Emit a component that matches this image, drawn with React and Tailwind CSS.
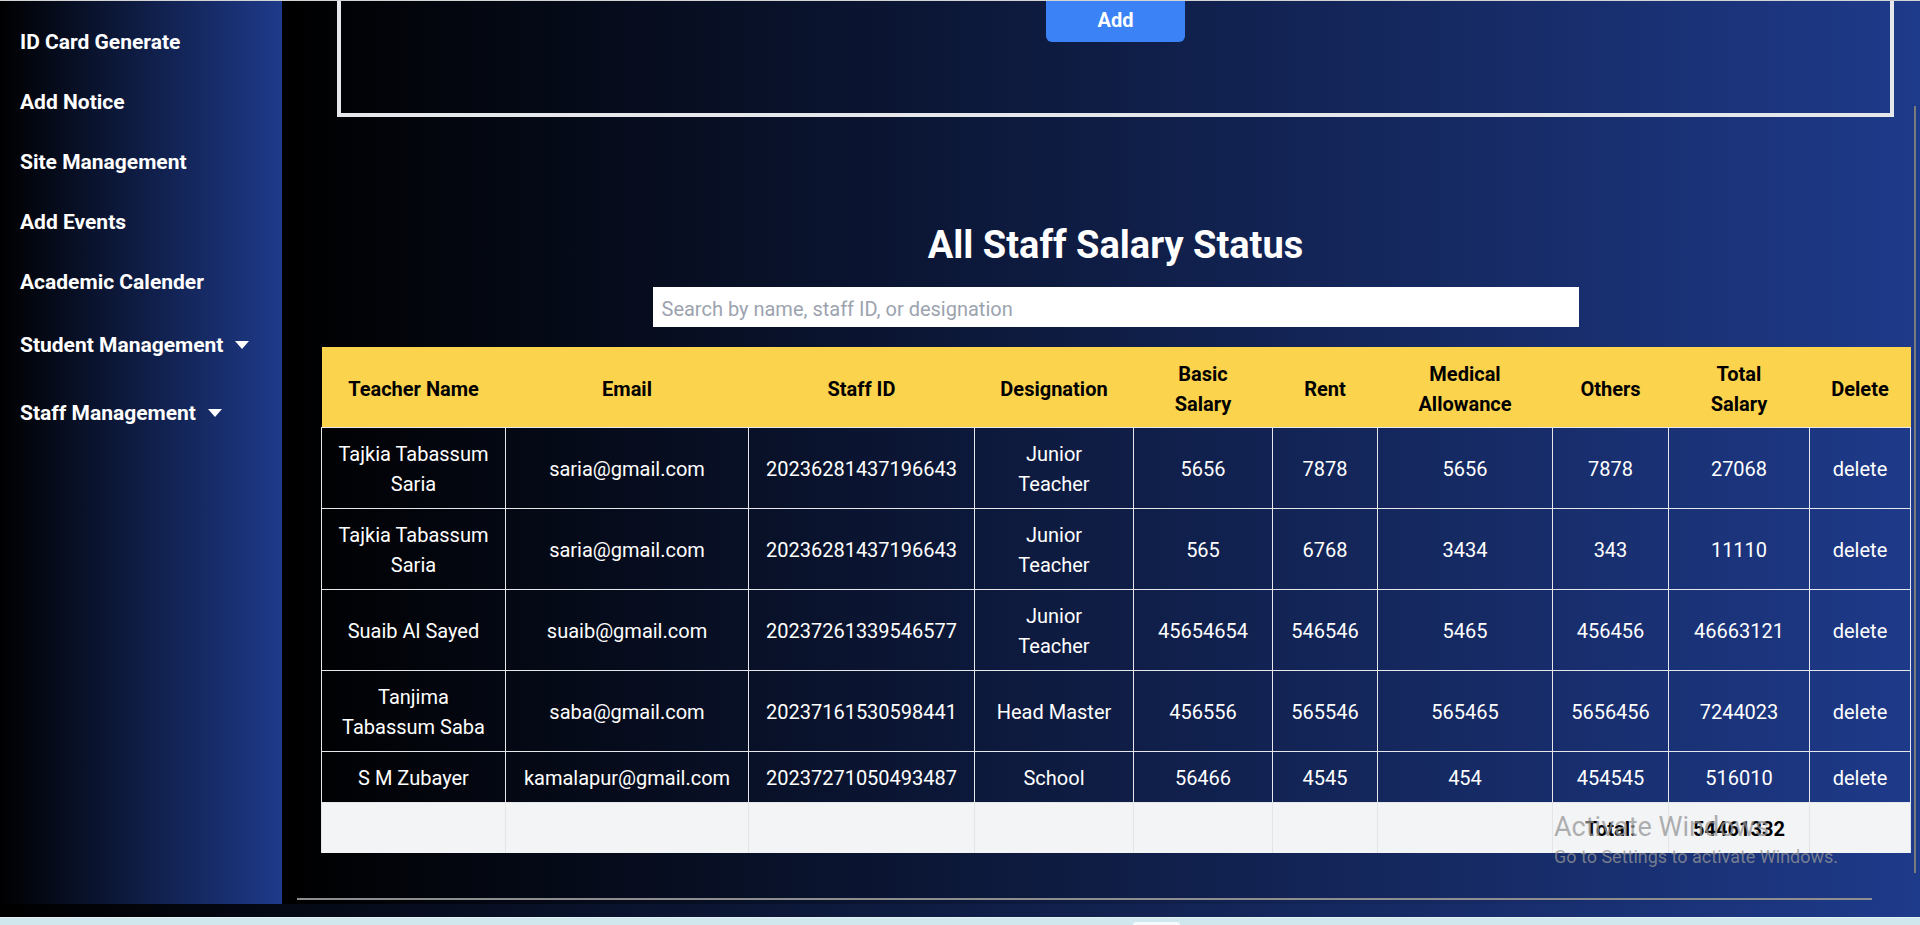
import React from "react";

const rows = [
  { name: ["Tajkia Tabassum", "Saria"], email: "saria@gmail.com", id: "20236281437196643", des: ["Junior", "Teacher"], basic: "5656", rent: "7878", med: "5656", others: "7878", total: "27068" },
  { name: ["Tajkia Tabassum", "Saria"], email: "saria@gmail.com", id: "20236281437196643", des: ["Junior", "Teacher"], basic: "565", rent: "6768", med: "3434", others: "343", total: "11110" },
  { name: ["Suaib Al Sayed"], email: "suaib@gmail.com", id: "20237261339546577", des: ["Junior", "Teacher"], basic: "45654654", rent: "546546", med: "5465", others: "456456", total: "46663121" },
  { name: ["Tanjima", "Tabassum Saba"], email: "saba@gmail.com", id: "20237161530598441", des: ["Head Master"], basic: "456556", rent: "565546", med: "565465", others: "5656456", total: "7244023" },
  { name: ["S M Zubayer"], email: "kamalapur@gmail.com", id: "20237271050493487", des: ["School"], basic: "56466", rent: "4545", med: "454", others: "454545", total: "516010" },
];

const headers = [["Teacher Name"], ["Email"], ["Staff ID"], ["Designation"], ["Basic", "Salary"], ["Rent"], ["Medical", "Allowance"], ["Others"], ["Total", "Salary"], ["Delete"]];

function Lines({ lines }) {
  return lines.map((l, i) => (
    <span key={i} className="block">
      {l}
    </span>
  ));
}

function Caret() {
  return (
    <svg width="14" height="8" viewBox="0 0 14 8" className="ml-3 inline-block">
      <path d="M0 0H14L7 8Z" fill="white" />
    </svg>
  );
}

export default function App() {
  const td = "border border-[#e5e7eb] px-2 pt-[11px] pb-[9px] text-center whitespace-nowrap";
  const ftd = "border-x border-[#e2e4e8] bg-[#f3f4f6] px-2 pt-[11px] pb-[9px] text-center whitespace-nowrap";
  return (
    <div className="relative flex h-[925px] w-full flex-col overflow-hidden bg-linear-to-r/srgb from-black to-[#1e3a8a] font-['Roboto',sans-serif] text-[20px] leading-[30px]">
      <div className="h-px w-full bg-[#d4d4d4]" />
      <div className="flex h-[903px]">
        <aside className="w-[282px] shrink-0 bg-linear-to-r/srgb from-black to-[#1e3a8a] pl-5 pt-[11px] text-[21px] font-bold text-white">
          <div className="py-[15px]">ID Card Generate</div>
          <div className="py-[15px]">Add Notice</div>
          <div className="py-[15px]">Site Management</div>
          <div className="py-[15px]">Add Events</div>
          <div className="py-[15px]">Academic Calender</div>
          <div className="flex items-center py-[18px]">
            Student Management
            <Caret />
          </div>
          <div className="flex items-center pt-[20px]">
            Staff Management
            <Caret />
          </div>
        </aside>
        <main className="flex flex-1 flex-col bg-linear-to-r/srgb from-black to-[#1e3a8a]">
          <div className="ml-[39px] w-[1589px]">
            <div className="mx-4 h-[116px] border-x-4 border-b-4 border-[#e5e7eb]">
              <button className="mx-auto flex h-[41px] w-[139px] items-center justify-center rounded-b-md bg-[#3b82f6] pb-1 font-bold text-white">
                Add
              </button>
            </div>
            <h1 className="mt-[106px] pt-[2px] h-[40px] text-center text-[38px] font-bold leading-[40px] text-white">All Staff Salary Status</h1>
            <input
              type="text"
              placeholder="Search by name, staff ID, or designation"
              className="mx-auto mt-6 block h-[40px] w-[926px] bg-white pl-[9px] pt-[3px] text-[20px] text-black outline-none placeholder:text-[#9ca3af]"
            />
            <table className="mt-5 w-[1589px] table-fixed border-collapse text-white">
              <colgroup>
                <col className="w-[184px]" />
                <col className="w-[243px]" />
                <col className="w-[226px]" />
                <col className="w-[159px]" />
                <col className="w-[139px]" />
                <col className="w-[105px]" />
                <col className="w-[175px]" />
                <col className="w-[116px]" />
                <col className="w-[141px]" />
                <col className="w-[101px]" />
              </colgroup>
              <thead>
                <tr className="h-[80px] bg-[#fcd34d] text-black">
                  {headers.map((h, i) => (
                    <th key={i} className="px-1 pt-[12px] pb-[8px] text-center font-bold whitespace-nowrap">
                      <Lines lines={h} />
                    </th>
                  ))}
                </tr>
              </thead>
              <tbody>
                {rows.map((r, i) => (
                  <tr key={i}>
                    <td className={td}><Lines lines={r.name} /></td>
                    <td className={td}>{r.email}</td>
                    <td className={td}>{r.id}</td>
                    <td className={td}><Lines lines={r.des} /></td>
                    <td className={td}>{r.basic}</td>
                    <td className={td}>{r.rent}</td>
                    <td className={td}>{r.med}</td>
                    <td className={td}>{r.others}</td>
                    <td className={td}>{r.total}</td>
                    <td className={td}>delete</td>
                  </tr>
                ))}
                <tr className="text-black">
                  <td className={ftd}>&nbsp;</td>
                  <td className={ftd}></td>
                  <td className={ftd}></td>
                  <td className={ftd}></td>
                  <td className={ftd}></td>
                  <td className={ftd}></td>
                  <td className={ftd}></td>
                  <td className={ftd + " font-bold"}>Total:</td>
                  <td className={ftd + " font-bold"}>54461332</td>
                  <td className={ftd}></td>
                </tr>
              </tbody>
            </table>
          </div>
          <div className="ml-[15px] mt-[45px] h-[2px] w-[1575px] bg-[#8e8e8e]" />
        </main>
      </div>
      <div className="h-[13px]" />
      <div className="flex h-[8px] items-end border-t border-[#e3f1f4] bg-[#cfe7ed]">
        <div className="ml-[1133px] h-[3px] w-[47px] rounded-t-sm bg-[#f5fafb]" />
      </div>

      <div className="absolute left-[1914px] top-[106px] h-[767px] w-[2px] bg-[#7a7a7a]" />

      <div className="pointer-events-none absolute left-[1554px] top-[809px] text-[rgba(150,150,150,0.75)]">
        <div className="text-[27px] leading-[36px]">Activate Windows</div>
        <div className="text-[18px] leading-[24px]">Go to Settings to activate Windows.</div>
      </div>
    </div>
  );
}
